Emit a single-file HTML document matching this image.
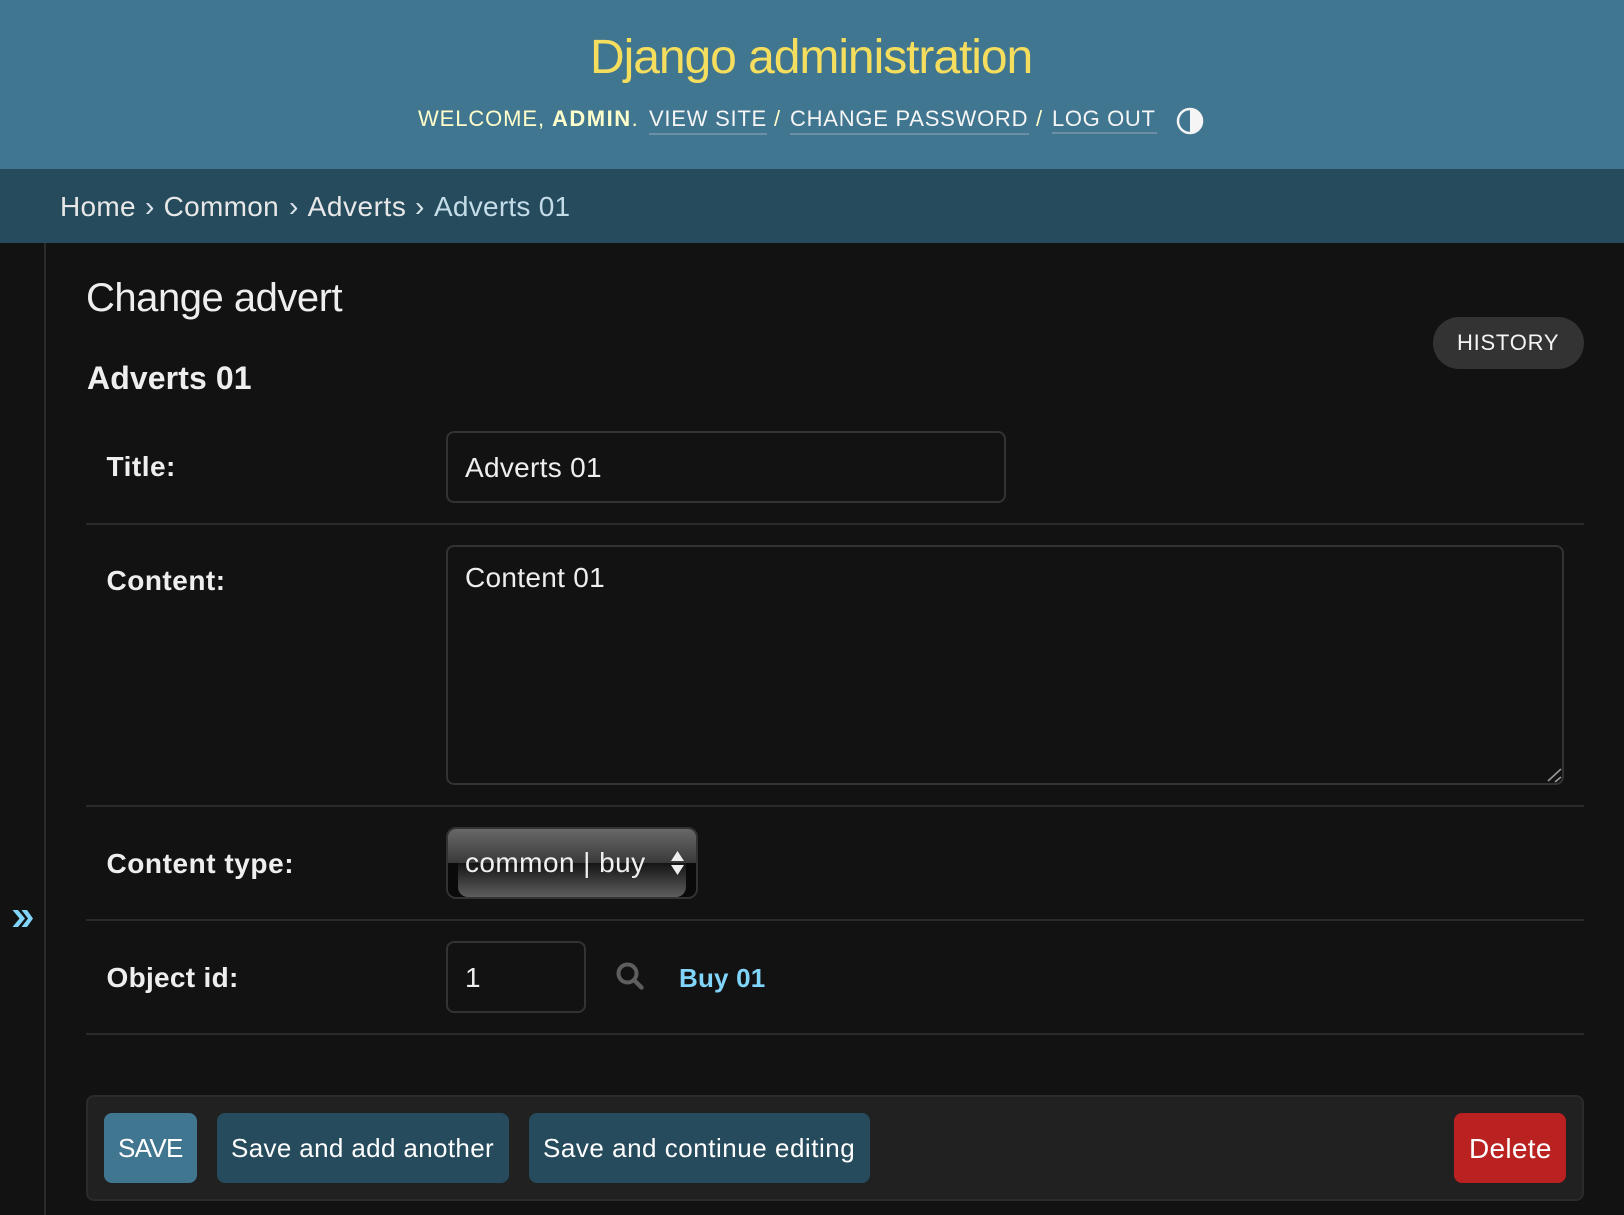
<!DOCTYPE html>
<html lang="en">
<head>
<meta charset="utf-8">
<title>Change advert | Django site admin</title>
<style>
html,body{margin:0;padding:0;background:#121212}
body{position:relative;width:1624px;height:1215px;overflow:hidden;font-family:"Liberation Sans",Arial,sans-serif;color:#eee}
.t{position:absolute;line-height:0;white-space:nowrap;font-size:28px}
.b{position:absolute;box-sizing:border-box}
a{color:inherit;text-decoration:none}
.inp{border:2px solid #333;border-radius:8px;background:#121212}
.line{position:absolute;left:86px;width:1498px;height:2px;background:#2a2a2a}
.lab{font-weight:700;left:106.500px;color:#eee}
.btn{border-radius:8px;top:1113px;height:70px}
.w{color:#fff;font-size:26px}
.u{font-size:22px;top:119.400px;color:#f5f5f5;letter-spacing:.75px}
.s{font-size:22px;top:119.400px;color:#ffc}
.bc{top:207.300px;color:#e8e8e8;letter-spacing:.3px}
.sep{top:207.300px;color:#dbe6ec}
</style>
</head>
<body>
<div class="b" style="left:0;top:0;width:1624px;height:169px;background:#417690"></div>
<div class="t" style="left:590px;top:58.400px;font-size:48px;color:#f5dd5d;letter-spacing:-1.050px">Django administration</div>

<div class="t s" style="left:418px;letter-spacing:.9px">WELCOME,</div>
<div class="t s" style="left:552px;font-weight:700;letter-spacing:1.500px">ADMIN<span style="font-weight:400">.</span></div>
<a class="t u" href="#" style="left:649px">VIEW SITE</a>
<div class="b" style="left:649px;top:133px;width:118px;height:2px;background:#6d8fa5"></div>
<div class="t s" style="left:774px">/</div>
<a class="t u" href="#" style="left:790px">CHANGE PASSWORD</a>
<div class="b" style="left:790px;top:133px;width:239px;height:2px;background:#6d8fa5"></div>
<div class="t s" style="left:1036px">/</div>
<a class="t u" href="#" style="left:1052px;letter-spacing:.65px">LOG OUT</a>
<div class="b" style="left:1052px;top:132px;width:105px;height:2px;background:#6d8fa5"></div>
<svg style="position:absolute;left:1176px;top:106px" width="28" height="30" viewBox="0 0 28 30"><circle cx="14" cy="15" r="12" fill="none" stroke="#f5f5f5" stroke-width="2.500"/><path d="M14 2a13 13 0 0 1 0 26z" fill="#f5f5f5"/></svg>

<div class="b" style="left:0;top:169px;width:1624px;height:74px;background:#264b5d"></div>
<a class="t bc" href="#" style="left:60px">Home</a>
<div class="t sep" style="left:145px">›</div>
<a class="t bc" href="#" style="left:163.600px">Common</a>
<div class="t sep" style="left:289px">›</div>
<a class="t bc" href="#" style="left:307.600px;letter-spacing:.55px">Adverts</a>
<div class="t sep" style="left:415px">›</div>
<div class="t bc" style="left:434px;color:#c4dce8;letter-spacing:.25px">Adverts 01</div>

<div class="b" style="left:44px;top:243px;width:2px;height:972px;background:#2b2b2b"></div>
<svg style="position:absolute;left:0;top:900px" width="40" height="36" viewBox="0 900 40 36"><path d="M12.500 910H18L25 918.500 18 927H12.500L19.500 918.500ZM21.500 910H27L33 918.500 27 927H21.500L28 918.500Z" fill="#81d4fa"/></svg>

<div class="t" style="left:86px;top:297.500px;font-size:40px;color:#eee;letter-spacing:-.48px">Change advert</div>
<div class="t" style="left:87px;top:377.500px;font-size:32px;font-weight:700;color:#eee;letter-spacing:.1px">Adverts 01</div>

<div class="b" style="left:1433px;top:317px;width:151px;height:52px;border-radius:26px;background:#333"></div>
<a class="t" href="#" style="left:1457px;top:343px;font-size:22px;color:#f5f5f5;letter-spacing:.75px">HISTORY</a>

<div class="t lab" style="top:467px;letter-spacing:.5px">Title:</div>
<div class="b inp" style="left:446px;top:431px;width:560px;height:72px"></div>
<div class="t" style="left:465px;top:468.300px;letter-spacing:.3px">Adverts 01</div>
<div class="line" style="top:523px"></div>

<div class="t lab" style="top:581.300px;letter-spacing:.5px">Content:</div>
<div class="b inp" style="left:446px;top:545px;width:1118px;height:240px"></div>
<div class="t" style="left:465px;top:578.300px;letter-spacing:.3px">Content 01</div>
<svg style="position:absolute;left:1544px;top:766px" width="20" height="18" viewBox="0 0 20 18"><path d="M4 15L17 3M11 16l6-5" stroke="#999" stroke-width="1.600" fill="none"/></svg>
<div class="line" style="top:805px"></div>

<div class="t lab" style="top:864px;letter-spacing:.55px">Content type:</div>
<div class="b inp" style="left:446px;top:827px;width:252px;height:72px;border-radius:10px;background:#0a0a0a;overflow:hidden">
  <div class="b" style="left:0;top:0;width:248px;height:34px;background:linear-gradient(#686868,#3a3a3a)"></div>
  <div class="b" style="left:10px;top:34px;width:228px;height:34px;border-radius:0 0 10px 10px;background:linear-gradient(#141414 0,#5e5e5e 100%)"></div>
</div>
<div class="t" style="left:465px;top:863px;color:#f0f0f0;letter-spacing:.43px">common | buy</div>
<svg style="position:absolute;left:670px;top:850px" width="16" height="27" viewBox="0 0 16 27"><path d="M7.500 1L14 11H1zM7.500 25L1 15h13z" fill="#eee"/></svg>
<div class="line" style="top:919px"></div>

<div class="t lab" style="top:978px;letter-spacing:.3px">Object id:</div>
<div class="b inp" style="left:446px;top:941px;width:140px;height:72px"></div>
<div class="t" style="left:465px;top:978px">1</div>
<svg style="position:absolute;left:615px;top:961px" width="30" height="30" viewBox="0 0 30 30"><circle cx="12.500" cy="12.500" r="9" fill="none" stroke="#5e5e5e" stroke-width="4"/><path d="M19 19l7.500 7.500" stroke="#5e5e5e" stroke-width="4.400" stroke-linecap="round"/></svg>
<a class="t" href="#" style="left:679px;top:977.500px;font-size:26px;color:#81d4fa;font-weight:700;letter-spacing:.2px">Buy 01</a>
<div class="line" style="top:1033px"></div>

<div class="b" style="left:86px;top:1095px;width:1498px;height:106px;background:#212121;border:2px solid #2b2b2b;border-radius:8px"></div>
<div class="b btn" style="left:104px;width:93px;background:#417690"></div>
<div class="t w" style="left:118px;top:1148px;letter-spacing:-.7px">SAVE</div>
<div class="b btn" style="left:217px;width:292px;background:#264b5d"></div>
<div class="t w" style="left:231px;top:1148px;letter-spacing:.36px">Save and add another</div>
<div class="b btn" style="left:529px;width:341px;background:#264b5d"></div>
<div class="t w" style="left:543px;top:1148px;letter-spacing:.52px">Save and continue editing</div>
<div class="b btn" style="left:1454px;width:112px;background:#ba2121"></div>
<a class="t w" href="#" style="left:1469px;top:1149px;font-size:28px;letter-spacing:.3px">Delete</a>
</body>
</html>
